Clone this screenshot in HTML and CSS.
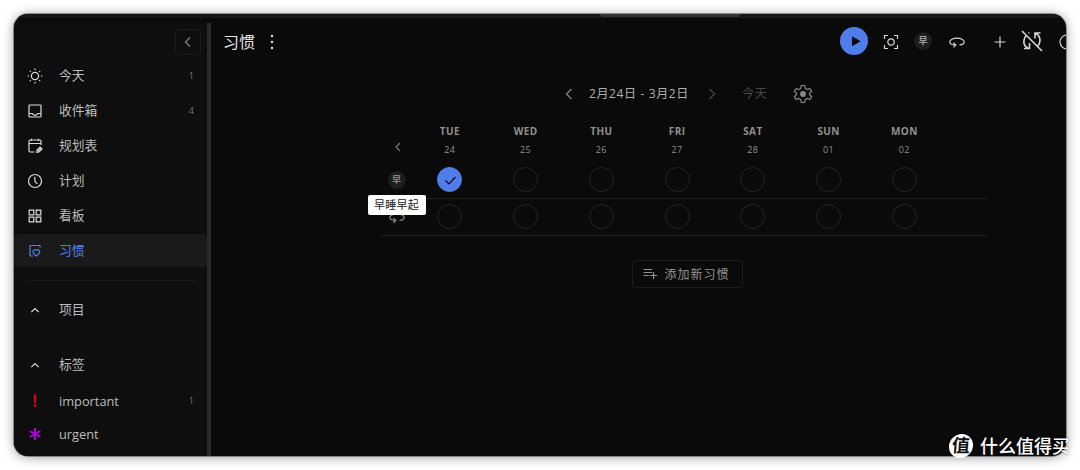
FILE: index.html
```html
<!DOCTYPE html>
<html lang="zh-CN">
<head>
    <meta charset="UTF-8">
    <meta name="viewport" content="width=device-width, initial-scale=1.0">
    <title>习惯</title>
    <link rel="stylesheet" href="styles.css">
</head>
<body>
    <div class="window">
        <div class="titlebar"><div class="notch"></div></div>

        <div class="layout">
            <!-- Side navigation -->
            <nav class="sidebar">
                <button class="collapse">
                    <svg width="16" height="16" viewBox="0 0 16 16"><path d="M10 3.5L5.5 8l4.5 4.5"/></svg>
                </button>

                <a class="item">
                    <svg width="16" height="16" viewBox="0 0 16 16"><circle cx="8" cy="8" r="3.6"/><path d="M8 .6v1.5M8 13.9v1.5M.6 8h1.5M13.9 8h1.5M2.8 2.8l1 1M12.2 12.2l1 1M2.8 13.2l1-1M12.2 3.8l1-1"/></svg>
                    <span>今天</span><em>1</em>
                </a>
                <a class="item">
                    <svg width="16" height="16" viewBox="0 0 16 16"><rect x="2" y="2" width="12" height="12" rx=".8"/><path d="M2 10.5h3.2c.6 1.3 1.5 1.8 2.8 1.8s2.200-.5 2.800-1.800H14"/></svg>
                    <span>收件箱</span><em>4</em>
                </a>
                <a class="item">
                    <svg width="16" height="16" viewBox="0 0 16 16"><path d="M7.500 14H3.200c-.7 0-1.200-.5-1.200-1.200V3.200C2 2.500 2.500 2 3.200 2h9.600c.7 0 1.200.5 1.200 1.200V7M2 5.500h12M4.500.7V3M11.500.7V3"/><path d="M9.800 14.200l.3-2.200 3-3 1.900 1.900-3 3z"/><path d="M11 13l3-3"/></svg>
                    <span>规划表</span>
                </a>
                <a class="item">
                    <svg width="16" height="16" viewBox="0 0 16 16"><circle cx="8" cy="8" r="6.500"/><path d="M7.800 3.800v4.400l2.600 2.600"/></svg>
                    <span>计划</span>
                </a>
                <a class="item">
                    <svg width="16" height="16" viewBox="0 0 16 16"><path d="M2.200 2.200h4.600v4.600H2.200zM9.200 2.200h4.600v4.600H9.200zM2.200 9.200h4.600v4.600H2.200zM9.200 9.200h4.600v4.600H9.200z"/></svg>
                    <span>看板</span>
                </a>
                <a class="item active">
                    <svg width="16" height="16" viewBox="0 0 16 16"><path d="M6 13H4.200c-.7 0-1.200-.5-1.200-1.200V3.200C3 2.600 3.400 2.500 3.800 2.500H13v2"/><path d="M9.300 13.200L6.700 10.500C5.200 8.800 6.500 6.500 8.200 6.700c.5 0 .8.300 1.100.6.300-.3.600-.6 1.100-.6 1.900-.2 3.100 2.200 1.500 3.800z"/></svg>
                    <span>习惯</span>
                </a>

                <div class="separator"></div>

                <a class="item group">
                    <svg width="16" height="16" viewBox="0 0 16 16"><path d="M4.300 10.200L8 6.500l3.700 3.700"/></svg>
                    <span>项目</span>
                </a>
                <a class="item group tags">
                    <svg width="16" height="16" viewBox="0 0 16 16"><path d="M4.300 10.200L8 6.500l3.700 3.700"/></svg>
                    <span>标签</span>
                </a>
                <a class="item tag important">
                    <svg width="16" height="16" viewBox="0 0 16 16"><path class="fill" d="M6.600 1.500h2.800L9 10H7z"/><circle class="fill" cx="8" cy="12.500" r="1.500"/></svg>
                    <span>important</span><em>1</em>
                </a>
                <a class="item tag urgent">
                    <svg width="16" height="16" viewBox="0 0 16 16"><path d="M8 2v12M2.800 5l10.400 6M2.800 11l10.400-6"/></svg>
                    <span>urgent</span>
                </a>
            </nav>

            <div class="resizer"></div>

            <main class="content">
                <header class="toolbar">
                    <h1>习惯</h1>
                    <svg class="more" width="4" height="16" viewBox="0 0 4 16"><circle cx="2" cy="2" r="1.200"/><circle cx="2" cy="8" r="1.200"/><circle cx="2" cy="14" r="1.200"/></svg>

                    <div class="actions">
                        <button class="play">
                            <svg width="28" height="28" viewBox="0 0 28 28"><path d="M12 9.200v10l8.600-5z"/></svg>
                        </button>
                        <svg class="focus" width="16" height="16" viewBox="0 0 16 16"><circle cx="8" cy="8" r="3.200"/><path d="M1.500 5V1.500H5M11 1.500h3.500V5M14.500 11v3.500H11M5 14.500H1.500V11"/></svg>
                        <span class="habit-icon">早</span>
                        <svg class="orbit" width="16" height="16" viewBox="0 0 16 16"><path d="M10.500 10.900c2.700-.3 4.700-1.400 4.700-3C15.200 5.900 12 4.200 8 4.200S.8 5.900.8 7.900c0 1.600 2.200 2.800 5.700 3M4.500 8.600l2.300 2.300-2.300 2.500"/></svg>
                        <svg class="plus" width="12" height="12" viewBox="0 0 12 12"><path d="M6 .6v10.800M.6 6h10.800"/></svg>
                        <svg class="sync" width="22" height="22" viewBox="0 0 22 22"><path d="M1 1l20 20M7.500 18.500C3.500 16.500 2 12.500 3.600 8.200 4 7 4.600 6.200 5.500 5.300M3 18.500h5.500V13M14.500 3.300c3.800 2.200 5.300 6 3.800 10.200-.3.900-.8 1.700-1.400 2.400M19.500 3H14v5.500M8.300 2.600l-1 .5"/></svg>
                        <svg class="clock" width="16" height="16" viewBox="0 0 16 16"><circle cx="8" cy="8" r="7"/><path d="M8 3.500V8l3 2"/></svg>
                    </div>
                </header>

                <!-- Week switcher -->
                <div class="week-nav">
                    <svg width="16" height="16" viewBox="0 0 16 16"><path d="M10.500 3L5.500 8l5 5"/></svg>
                    <span class="range">2月24日 - 3月2日</span>
                    <svg class="next" width="16" height="16" viewBox="0 0 16 16"><path d="M5.500 3l5 5-5 5"/></svg>
                    <span class="today">今天</span>
                    <svg class="gear" width="20" height="20" viewBox="0 0 20 20"><path d="M8.300 1.500h3.400l.6 2.900 1.900 1.100 2.700-1 1.700 2.900-2.100 1.900v1.400l2.100 1.900-1.700 2.900-2.700-1-1.900 1.100-.6 2.900H8.300l-.6-2.900-1.900-1.100-2.700 1-1.700-2.900 2.100-1.900V9.300L1.400 7.400l1.700-2.900 2.700 1 1.900-1.100z"/><circle class="fill" cx="10" cy="10" r="2.900"/></svg>
                </div>

                <!-- Habit table -->
                <div class="habits">
                    <div class="row head">
                        <svg width="16" height="16" viewBox="0 0 16 16"><path d="M10 4L6 8l4 4"/></svg>
                        <div class="day"><b>TUE</b><i>24</i></div>
                        <div class="day"><b>WED</b><i>25</i></div>
                        <div class="day"><b>THU</b><i>26</i></div>
                        <div class="day"><b>FRI</b><i>27</i></div>
                        <div class="day"><b>SAT</b><i>28</i></div>
                        <div class="day"><b>SUN</b><i>01</i></div>
                        <div class="day"><b>MON</b><i>02</i></div>
                    </div>
                    <div class="row">
                        <div class="label">
                            <span class="habit-icon">早</span>
                            <div class="tooltip">早睡早起</div>
                        </div>
                        <div class="check done">
                            <svg width="16" height="16" viewBox="0 0 16 16"><path d="M3.500 8.500L7 12l6.500-7"/></svg>
                        </div>
                        <div class="check"></div>
                        <div class="check"></div>
                        <div class="check"></div>
                        <div class="check"></div>
                        <div class="check"></div>
                        <div class="check"></div>
                    </div>
                    <div class="row">
                        <div class="label">
                            <svg width="16" height="16" viewBox="0 0 16 16"><path d="M10.500 11.500c2.700-.3 4.700-1.400 4.700-3C15.200 6.500 12 4.800 8 4.800S.8 6.500.8 8.500c0 1.600 2.200 2.800 5.700 3M4.500 9.200l2.300 2.300-2.300 2.500"/></svg>
                        </div>
                        <div class="check"></div>
                        <div class="check"></div>
                        <div class="check"></div>
                        <div class="check"></div>
                        <div class="check"></div>
                        <div class="check"></div>
                        <div class="check"></div>
                    </div>
                </div>

                <button class="add">
                    <svg width="16" height="16" viewBox="0 0 16 16"><path d="M1.500 3.500h8.500M1.500 6.500h8.500M1.500 9.500h5.500M11.500 6v7M8 9.500h7"/></svg>
                    添加新习惯
                </button>
            </main>
        </div>
    </div>

    <div class="watermark"><span>值</span>什么值得买</div>
</body>
</html>
```

FILE: styles.css
```css
body {
    margin: 0;
    padding: 14px;
    height: 470px;
    box-sizing: border-box;
    overflow: hidden;
    background-color: #fff;
    font-family: "Open Sans", "Noto Sans CJK SC", sans-serif;
    font-size: 12.8px;
    color: #bcbcbc;
}

button {
    padding: 0;
    border: none;
    background: none;
    font: inherit;
    color: inherit;
}

svg {
    flex: none;
    fill: none;
    stroke: currentColor;
    stroke-width: 1.2;
}

.fill {
    fill: currentColor;
    stroke: none;
}

.window {
    width: 1052px;
    height: 442px;
    overflow: hidden;
    border-radius: 14px;
    background-color: #0a0a0a;
    box-shadow: 0 0 0 1px rgba(0, 0, 0, 0.35), 0 1px 12px rgba(0, 0, 0, 0.4);
}

.titlebar {
    height: 4px;
    margin-bottom: 5px;
    background-color: #161616;
}

.notch {
    width: 140px;
    height: 3px;
    margin-left: 586px;
    border-radius: 0 0 8px 8px;
    background-color: #343434;
}

.layout {
    display: flex;
    height: 433px;
}

/* Sidebar */
.sidebar {
    display: flex;
    flex-direction: column;
    width: 193px;
    background-color: #0e0e0e;
}

.collapse {
    display: flex;
    align-items: center;
    justify-content: center;
    align-self: flex-end;
    width: 26px;
    height: 26px;
    margin: 6px 6px 4px 0;
    box-sizing: border-box;
    border: 1px solid #1c1c1c;
    border-radius: 4px;
    color: #777;
}

.collapse svg {
    stroke-width: 1.5;
}

.item {
    display: flex;
    align-items: center;
    height: 33px;
    margin-bottom: 2px;
    padding: 0 13px;
    border-radius: 4px;
}

.item span {
    padding-bottom: 2px;
}

.item.tag span {
    padding-bottom: 0;
}

.item svg {
    margin-right: 16px;
    color: #dcdcdc;
}

.item em {
    margin-left: auto;
    font-style: normal;
    font-size: 9px;
    color: #747474;
}

.item.active {
    background-color: #1a1a1a;
}

.item.active,
.item.active svg {
    color: #5580e8;
}

.separator {
    height: 1px;
    margin: 11px 11px 12px 12px;
    background-color: #181818;
}

.item.tags {
    margin-top: 20px;
    margin-bottom: 3px;
}

.item.important svg {
    color: #d0021b;
}

.item.important {
    margin-bottom: 0;
}

.item.urgent svg {
    color: #b000d8;
    stroke-width: 2;
}

.resizer {
    width: 4px;
    background-color: #2a2a2a;
}

/* Main area */
.content {
    flex: 1;
    min-width: 0;
}

.toolbar {
    display: flex;
    align-items: center;
    height: 38px;
    padding-left: 12px;
}

h1 {
    margin: 0;
    padding-bottom: 3px;
    font-size: 16px;
    font-weight: normal;
    color: #e4e4e4;
}

.more {
    margin-left: 15px;
    fill: #ddd;
    stroke: none;
}

.actions {
    display: flex;
    align-items: center;
    margin-left: auto;
    margin-right: -9px;
    color: #d4d4d4;
}

.play {
    width: 28px;
    height: 28px;
    margin: 0 15px 3px 0;
    border-radius: 50%;
    background-color: #4f7de9;
}

.play svg {
    display: block;
    fill: #0a0a0a;
    stroke: none;
}

.habit-icon {
    width: 18px;
    height: 18px;
    border-radius: 50%;
    background-color: #1d1d1d;
    font-size: 9px;
    font-weight: bold;
    line-height: 18px;
    text-align: center;
    color: #888;
}

.actions .habit-icon {
    margin: 0 17px 2px 15px;
    color: #a0a0a0;
}

.plus {
    margin-left: 29px;
}

.sync {
    margin: 0 16px 2px 15px;
    stroke-width: 1.6;
}

.week-nav {
    display: flex;
    align-items: center;
    height: 20px;
    margin-top: 23px;
    margin-left: 350px;
    color: #888;
}

.range {
    width: 100px;
    margin: 0 15px 0 12px;
    padding-bottom: 2px;
    font-size: 12px;
    letter-spacing: 0.63px;
    white-space: nowrap;
    color: #b0b0b0;
}

.next {
    color: #484848;
}

.today {
    margin: 0 25px 0 22px;
    padding-bottom: 2px;
    font-size: 12px;
    letter-spacing: 0.8px;
    color: #484848;
}

.habits {
    width: 607px;
    margin-top: 17px;
    margin-left: 170px;
}

.row {
    display: grid;
    grid-template-columns: 31px repeat(7, 75.75px);
    align-items: center;
    justify-items: center;
    height: 36px;
    border-bottom: 1px solid #202020;
}

.row.head {
    height: 41px;
    border: none;
    color: #777;
}

.head svg {
    margin-top: 11px;
    margin-left: 2px;
}

.day {
    display: flex;
    flex-direction: column;
    align-items: center;
    gap: 5px;
    padding-bottom: 3px;
    line-height: 14px;
    letter-spacing: 0.4px;
    color: #909090;
}

.day b {
    font-size: 10px;
}

.day i {
    font-size: 9px;
    font-style: normal;
}

.label {
    position: relative;
    display: flex;
    color: #888;
}

.tooltip {
    position: absolute;
    top: 24px;
    left: 50%;
    z-index: 1;
    width: 58px;
    height: 20px;
    transform: translateX(-50%);
    border-radius: 2px;
    background-color: #fff;
    font-size: 11px;
    line-height: 20px;
    letter-spacing: 0.3px;
    text-align: center;
    color: #222;
}

.check {
    display: flex;
    align-items: center;
    justify-content: center;
    width: 25px;
    height: 25px;
    margin-bottom: 1px;
    box-sizing: border-box;
    border: 1px solid #232323;
    border-radius: 50%;
}

.check.done {
    border-color: #4f7de9;
    background-color: #4f7de9;
    color: #0a0a0a;
}

.add {
    display: flex;
    align-items: center;
    justify-content: center;
    gap: 6px;
    width: 111px;
    height: 28px;
    margin: 24px 0 0 421px;
    padding-right: 3px;
    box-sizing: border-box;
    border: 1px solid #1c1c1c;
    border-radius: 3px;
    font-size: 12px;
    letter-spacing: 1px;
    white-space: nowrap;
    color: #949494;
}

/* Site mark laid over the window corner */
.watermark {
    position: absolute;
    right: 10px;
    bottom: 10px;
    display: flex;
    align-items: center;
    gap: 7px;
    height: 28px;
    font-size: 18px;
    font-weight: 500;
    line-height: 28px;
    color: #fff;
    text-shadow: 0 0 2px rgba(0, 0, 0, 0.6);
}

.watermark span {
    width: 24px;
    height: 24px;
    border-radius: 50%;
    background-color: #fff;
    font-weight: bold;
    line-height: 22px;
    text-align: center;
    text-shadow: none;
    transform: skewX(-4deg);
    color: #111;
}
```
